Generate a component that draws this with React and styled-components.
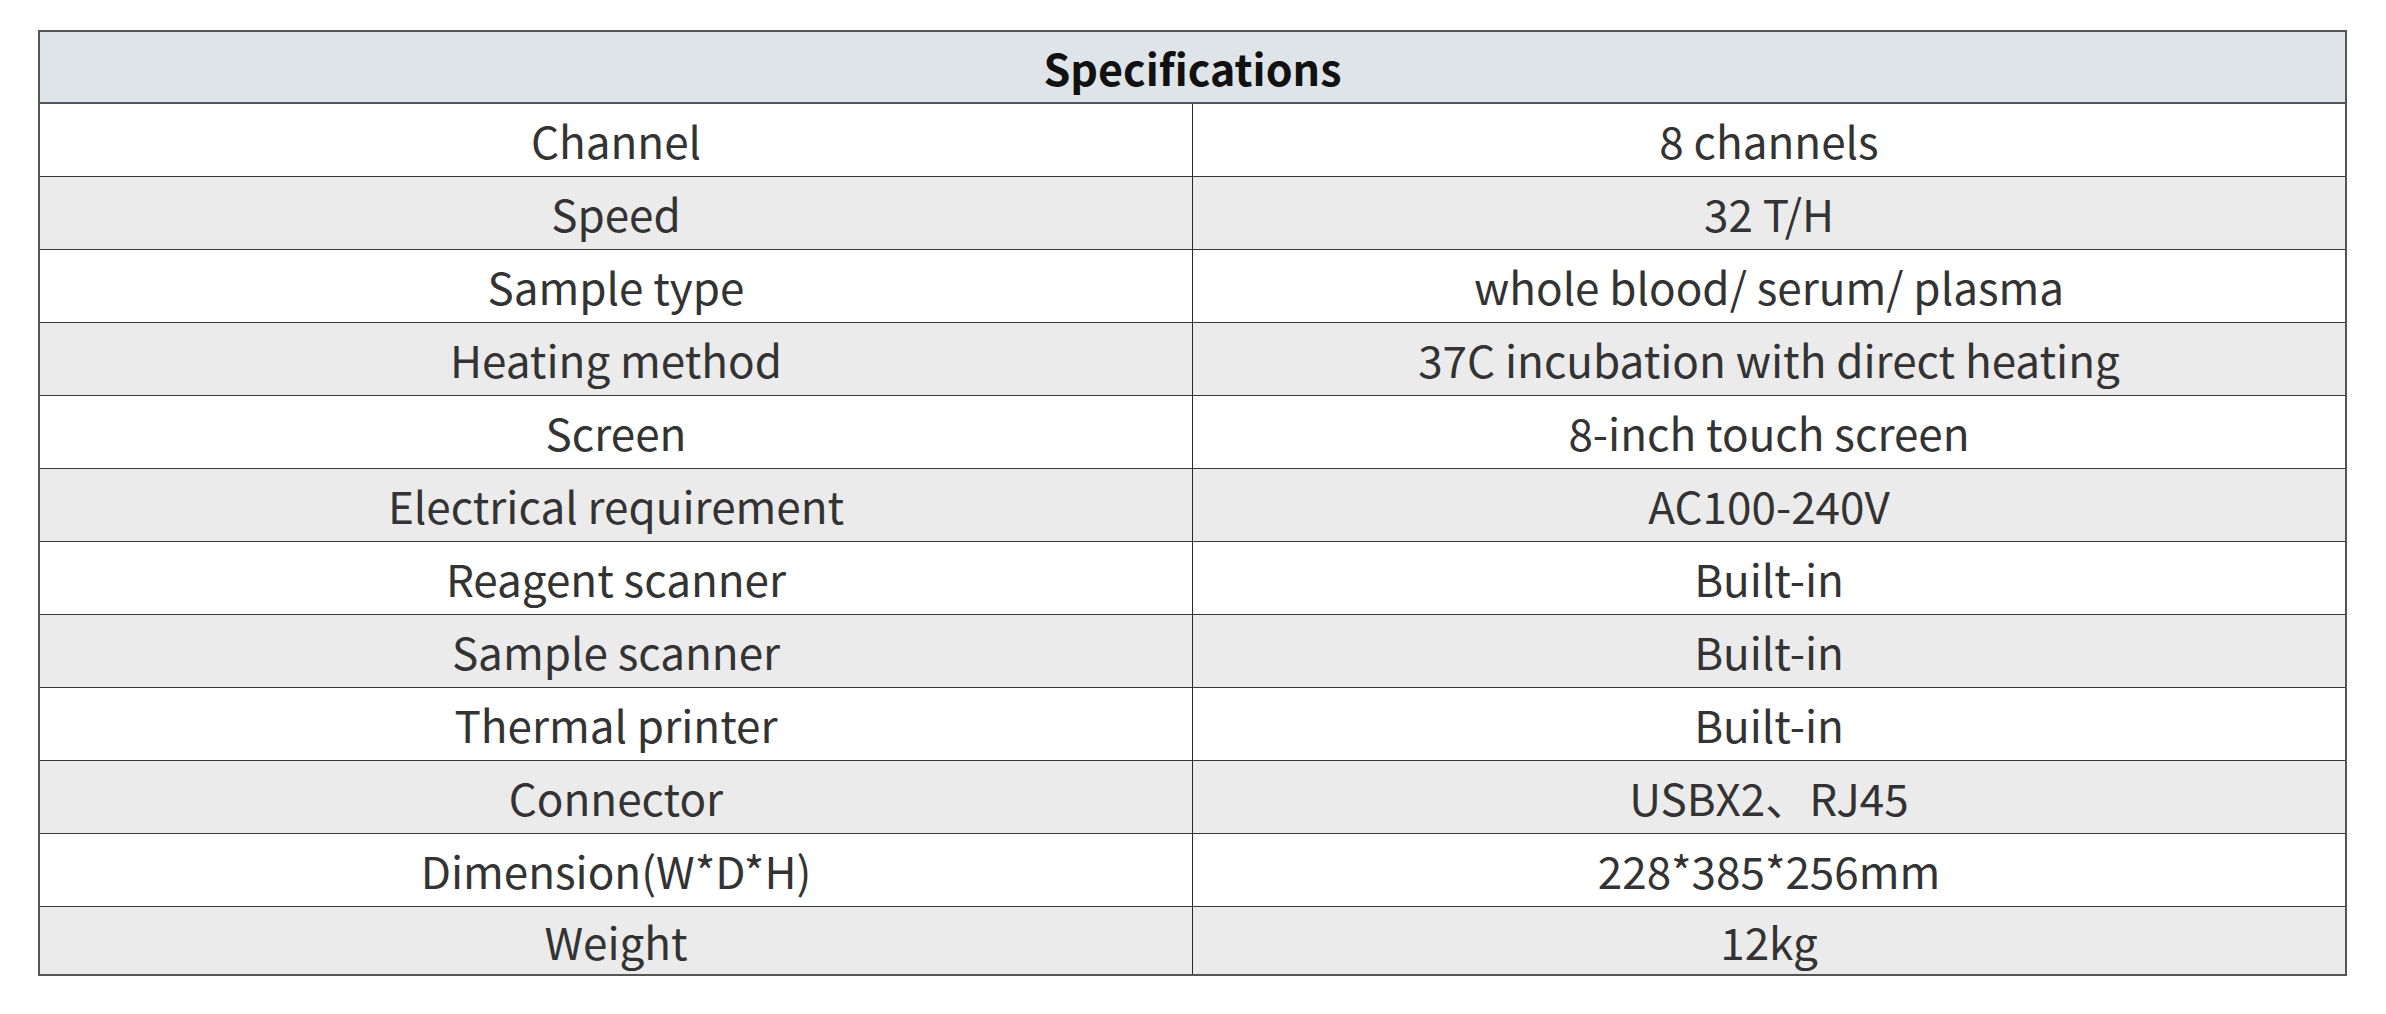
import React from "react";
import styled, { createGlobalStyle } from "styled-components";

const Global = createGlobalStyle`
  html, body { margin: 0; padding: 0; background: #ffffff; }
  body { font-family: "Noto Sans CJK SC", "Noto Sans", sans-serif; }
`;

const Page = styled.div`
  padding: 30px 39px 0 38px;
`;

const Table = styled.table`
  width: 2309px;
  border-collapse: collapse;
  table-layout: fixed;
  border: 2px solid #555555;
  color: #333333;
`;

const HeadCell = styled.th`
  height: 70px;
  padding: 0;
  background: #dfe4e8;
  color: #111111;
  font-size: 43px;
  font-weight: 700;
  text-align: center;
  vertical-align: middle;
  border-bottom: 2px solid #555555;
  line-height: 1;
`;

const Row = styled.tr`
  background: ${(p) => (p.$shade ? "#ebebeb" : "#ffffff")};
`;

const Cell = styled.td`
  height: ${(p) => (p.$last ? "67px" : "72px")};
  padding: 0;
  font-size: 44px;
  font-weight: 400;
  text-align: center;
  vertical-align: middle;
  line-height: 1;
  border-top: 1px solid #3a3a3a;
  border-left: 1px solid #2a2a2a;
  &:first-child { border-left: none; }
`;

const rows = [
  ["Channel", "8 channels"],
  ["Speed", "32 T/H"],
  ["Sample type", "whole blood/ serum/ plasma"],
  ["Heating method", "37C incubation with direct heating"],
  ["Screen", "8-inch touch screen"],
  ["Electrical requirement", "AC100-240V"],
  ["Reagent scanner", "Built-in"],
  ["Sample scanner", "Built-in"],
  ["Thermal printer", "Built-in"],
  ["Connector", "USBX2、RJ45"],
  ["Dimension(W*D*H)", "228*385*256mm"],
  ["Weight", "12kg"],
];

export default function App() {
  return (
    <Page>
      <Global />
      <Table>
        <colgroup>
          <col style={{ width: "50%" }} />
          <col style={{ width: "50%" }} />
        </colgroup>
        <thead>
          <tr>
            <HeadCell colSpan={2}>Specifications</HeadCell>
          </tr>
        </thead>
        <tbody>
          {rows.map(([k, v], i) => (
            <Row key={k} $shade={i % 2 === 1}>
              <Cell $last={i === rows.length - 1}>{k}</Cell>
              <Cell $last={i === rows.length - 1}>{v}</Cell>
            </Row>
          ))}
        </tbody>
      </Table>
    </Page>
  );
}
